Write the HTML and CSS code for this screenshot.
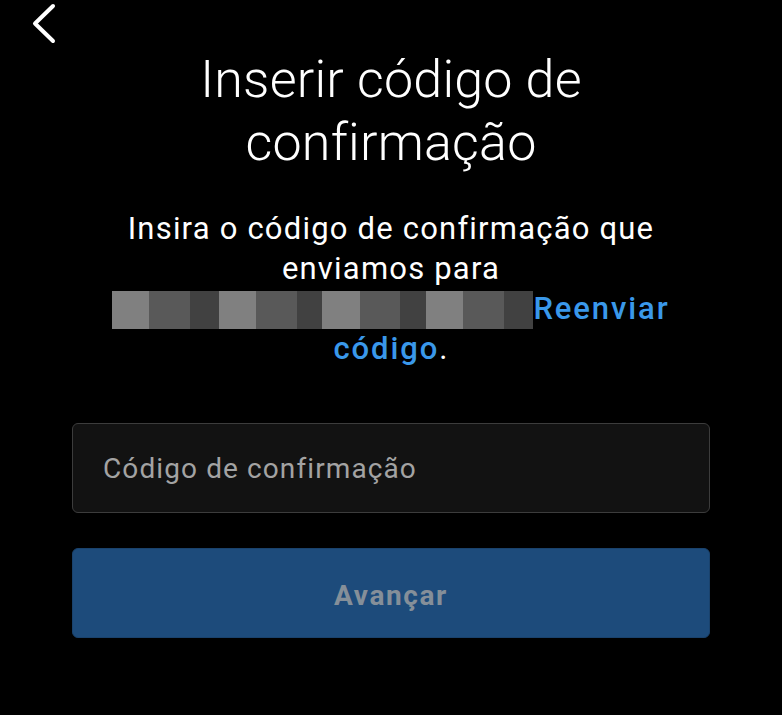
FILE: index.html
```html
<!DOCTYPE html>
<html lang="pt-BR">
<head>
<meta charset="utf-8">
<title>Inserir código de confirmação</title>
<link rel="stylesheet" href="styles.css">
</head>
<body>
<div class="screen">
  <header class="topbar">
    <button class="back" aria-label="Voltar">
      <svg width="28" height="44" viewBox="0 0 28 44" aria-hidden="true">
        <path d="M23 4 L5 21.5 L23 39" fill="none" stroke="#fff" stroke-width="4" stroke-linecap="round" stroke-linejoin="round"/>
      </svg>
    </button>
  </header>
  <h1 class="title">Inserir código de confirmação</h1>
  <p class="info">Insira o código de confirmação que enviamos para <span class="mosaic" aria-label="e-mail oculto"><i></i><i></i><i></i><i></i><i></i><i></i><i></i><i></i><i></i><i></i><i></i><i></i></span><a class="link" href="#">Reenviar código</a>.</p>
  <form class="form">
    <input class="field" type="text" placeholder="Código de confirmação">
    <button class="submit" type="button">Avançar</button>
  </form>
</div>
</body>
</html>
```
FILE: styles.css
```css
html, body {
  margin: 0;
  padding: 0;
  background: #000;
}
body {
  font-family: Roboto, "Liberation Sans", sans-serif;
  color: #fff;
}
.screen {
  display: flex;
  flex-direction: column;
  padding: 0 72px;
}
.topbar {
  padding: 2px 0 0 0;
  margin-left: -42px;
  height: 44px;
}
.back {
  display: block;
  background: none;
  border: 0;
  padding: 0;
  width: 28px;
  height: 44px;
}
.back svg {
  display: block;
}
.title {
  margin: 2px 0 0 0;
  font-weight: 300;
  font-size: 52px;
  line-height: 63px;
  letter-spacing: 0.2px;
  text-align: center;
  padding: 0 60px;
}
.info {
  margin: 35px auto 0;
  width: 600px;
  font-size: 31px;
  line-height: 40px;
  letter-spacing: 1.2px;
  text-align: center;
}
.mosaic {
  display: inline-grid;
  grid-template-columns: 37px 41px 29px 37px 41px 25px 38px 40px 26px 37px 41px 29px;
  height: 38px;
  vertical-align: -10px;
}
.mosaic i:nth-child(3n+1) { background: #808080; }
.mosaic i:nth-child(3n+2) { background: #595959; }
.mosaic i:nth-child(3n) { background: #414141; }
.link {
  color: #3a98ea;
  text-decoration: none;
  font-weight: 500;
  letter-spacing: 1.9px;
}
.form {
  display: flex;
  flex-direction: column;
  gap: 35px;
  margin-top: 54px;
}
.field {
  box-sizing: border-box;
  height: 90px;
  background: #121212;
  border: 1px solid #3c3c3c;
  border-radius: 6px;
  padding: 0 30px;
  font-family: Roboto, "Liberation Sans", sans-serif;
  font-size: 28px;
  letter-spacing: 1.1px;
  color: #fff;
  outline: none;
}
.field::placeholder {
  color: #a3a3a3;
}
.submit {
  height: 90px;
  background: #1d4b7b;
  border: 1px solid #1a426c;
  border-radius: 6px;
  padding: 4px 0 0 0;
  font-family: Roboto, "Liberation Sans", sans-serif;
  font-weight: 700;
  font-size: 28px;
  letter-spacing: 1.6px;
  color: #858f99;
}
```
